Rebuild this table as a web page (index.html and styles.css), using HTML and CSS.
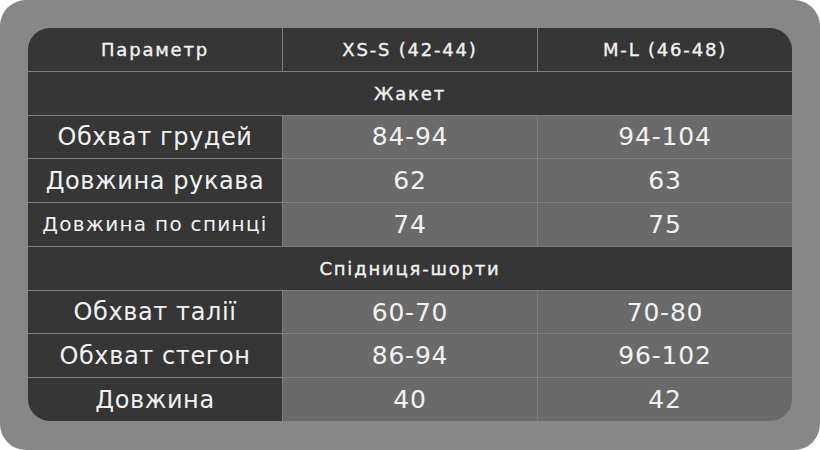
FILE: index.html
```html
<!DOCTYPE html>
<html lang="uk">
<head>
<meta charset="utf-8">
<link rel="stylesheet" href="styles.css">
</head>
<body>
<div class="frame">
  <div class="table">
    <div class="cell head">Параметр</div>
    <div class="cell head">XS-S (42-44)</div>
    <div class="cell head">M-L (46-48)</div>
    <div class="cell section">Жакет</div>
    <div class="cell label">Обхват грудей</div>
    <div class="cell val">84-94</div>
    <div class="cell val">94-104</div>
    <div class="cell label">Довжина рукава</div>
    <div class="cell val">62</div>
    <div class="cell val">63</div>
    <div class="cell label small">Довжина по спинці</div>
    <div class="cell val">74</div>
    <div class="cell val">75</div>
    <div class="cell section">Спідниця-шорти</div>
    <div class="cell label">Обхват талії</div>
    <div class="cell val">60-70</div>
    <div class="cell val">70-80</div>
    <div class="cell label">Обхват стегон</div>
    <div class="cell val">86-94</div>
    <div class="cell val">96-102</div>
    <div class="cell label">Довжина</div>
    <div class="cell val">40</div>
    <div class="cell val">42</div>
  </div>
</div>
</body>
</html>
```
FILE: styles.css
```css
html, body {
  margin: 0;
  padding: 0;
  background: #ffffff;
}
.frame {
  width: 820px;
  height: 450px;
  box-sizing: border-box;
  padding: 28px 28px 29px 28px;
  background: #878787;
  border-radius: 26px;
}
.table {
  height: 393px;
  display: grid;
  grid-template-columns: 1fr 1fr 1fr;
  grid-template-rows: repeat(9, 1fr);
  gap: 1px;
  background: #7e7e7e;
  border-radius: 22px;
  overflow: hidden;
  font-family: "DejaVu Sans", "Noto Sans", sans-serif;
  color: #f2f2f2;
}
.cell {
  display: flex;
  align-items: center;
  justify-content: center;
  background: #363636;
  white-space: nowrap;
}
.head,
.section {
  font-size: 18px;
  letter-spacing: 1.8px;
  -webkit-text-stroke: 0.35px #f2f2f2;
}
.section {
  grid-column: 1 / 4;
}
.label {
  font-size: 24px;
  letter-spacing: 0.6px;
}
.label.small {
  font-size: 20px;
  letter-spacing: 1.3px;
}
.val {
  background: #6a6a6a;
  font-size: 25px;
  letter-spacing: 0.8px;
}
```
